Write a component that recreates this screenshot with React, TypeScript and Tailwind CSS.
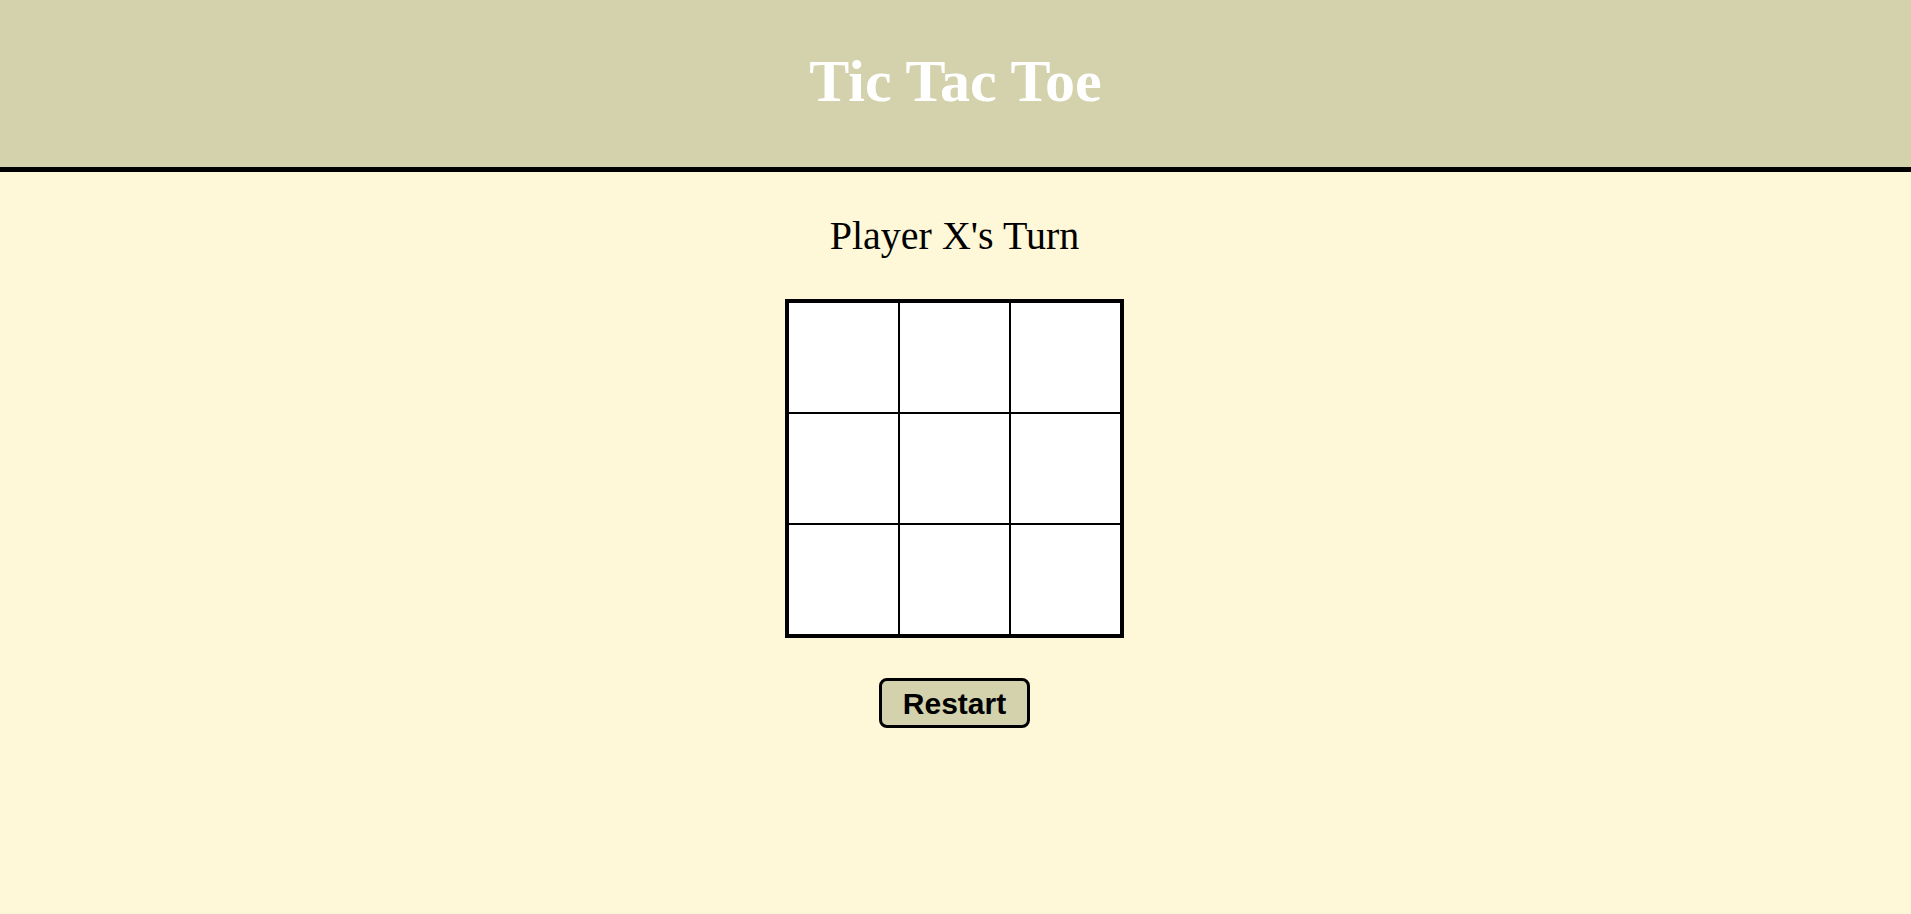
import { useState } from "react";

type Cell = "X" | "O" | null;

export default function App() {
  const [cells, setCells] = useState<Cell[]>(Array(9).fill(null));
  const [turn, setTurn] = useState<"X" | "O">("X");

  const play = (i: number) => {
    if (cells[i]) return;
    const next = [...cells];
    next[i] = turn;
    setCells(next);
    setTurn(turn === "X" ? "O" : "X");
  };

  const restart = () => {
    setCells(Array(9).fill(null));
    setTurn("X");
  };

  return (
    <div className="min-h-screen bg-[#fef8d8] font-['Liberation_Serif',serif] text-black">
      <header className="flex h-[172px] items-center justify-center border-b-[5px] border-black bg-[#d3d2ad] pb-[6px]">
        <h1 className="text-[60px] font-bold text-white">Tic Tac Toe</h1>
      </header>

      <div className="flex flex-col items-center pr-[2px]">
        <p className="mt-[42px] text-[40px] leading-[44px]">Player {turn}'s Turn</p>

        <div className="mt-[41px] grid grid-cols-3 border-[3px] border-black bg-white">
          {cells.map((c, i) => (
            <button
              key={i}
              onClick={() => play(i)}
              className="flex h-[111px] w-[111px] items-center justify-center border border-black text-[64px]"
            >
              {c}
            </button>
          ))}
        </div>

        <button
          onClick={restart}
          className="mt-[40px] h-[50px] rounded-[8px] border-[3px] border-black bg-[#d3d2ad] px-[21px] font-['Liberation_Sans',sans-serif] text-[30px] font-bold"
        >
          Restart
        </button>
      </div>
    </div>
  );
}
